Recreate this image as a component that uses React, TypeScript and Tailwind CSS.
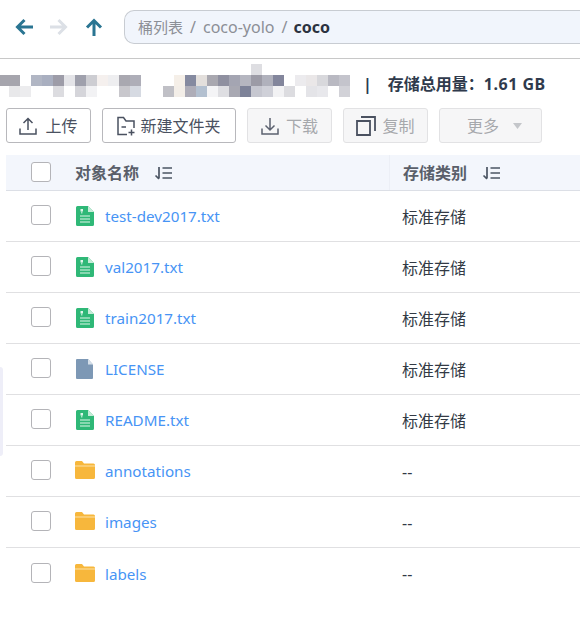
import React from "react";

const font = { fontFamily: '"Noto Sans", "Noto Sans CJK SC", sans-serif' };

function Sort() {
  return (
    <svg width="19" height="14" viewBox="0 0 19 14" className="ml-[15px]" fill="none" stroke="#4b5563" strokeWidth="1.700">
      <path d="M5 1v11.500M1.500 9.500 5 12.800" />
      <path d="M8.500 2H18M8.500 7H18M8.500 12H18" />
    </svg>
  );
}

function Check() {
  return <span className="block w-5 h-5 -mt-[2px] rounded-[3px] border border-[#b4b4b8] bg-white shrink-0" />;
}

function TxtIcon() {
  return (
    <svg width="18" height="20" viewBox="0 0 18 20" className="ml-px -mt-px">
      <path d="M1.500 0H12l6 6v12.500a1.500 1.500 0 0 1-1.500 1.500h-15A1.500 1.500 0 0 1 0 18.500V1.500A1.500 1.500 0 0 1 1.500 0Z" fill="#2fb877" />
      <path d="M12 0l6 6h-6Z" fill="#c5ecd8" />
      <path d="M4 10h10M4 13h10M4 16h10" stroke="#dff5ea" strokeWidth="1.200" />
      <rect x="4.500" y="3" width="2.500" height="2.500" fill="#dff5ea" />
      <rect x="5.300" y="5.500" width="1" height="2" fill="#dff5ea" />
    </svg>
  );
}

function FileIcon() {
  return (
    <svg width="17" height="20" viewBox="0 0 17 20" className="ml-px -mt-px">
      <path d="M1 0H12l5 5.500V19a1 1 0 0 1-1 1H1a1 1 0 0 1-1-1V1a1 1 0 0 1 1-1Z" fill="#7d98b5" />
      <path d="M12 0l5 5.500h-5Z" fill="#d5dfe9" />
    </svg>
  );
}

function FolderIcon() {
  return (
    <svg width="20" height="18" viewBox="0 0 20 18" className="-mt-[2px]">
      <path d="M1.500 0H7l2 2.500h9.500A1.500 1.500 0 0 1 20 4v12.500a1.500 1.500 0 0 1-1.500 1.500h-17A1.500 1.500 0 0 1 0 16.500V1.500A1.500 1.500 0 0 1 1.500 0Z" fill="#f7b73c" />
      <path d="M0 5h20" stroke="#fde2a8" strokeWidth="1" />
    </svg>
  );
}

const mosaic: [number, number, string][] = [
  [0, 0, "#a6a5ad"], [1, 0, "#a6a5ad"], [3, 0, "#b1b6c4"], [4, 0, "#a9afc0"], [5, 0, "#9d9ca8"], [6, 0, "#e4e4e8"], [7, 0, "#9fa0ac"], [8, 0, "#cdcdd2"], [9, 0, "#f5f0ee"], [10, 0, "#eeeef0"], [11, 0, "#a9a8b0"], [12, 0, "#aeaeb8"],
  [1, 1, "#e8e8ea"], [2, 1, "#ececee"], [5, 1, "#dcdce0"], [7, 1, "#d5d5da"], [8, 1, "#f2f2f4"], [11, 1, "#c8c7cc"], [12, 1, "#d6dae2"],
  [16, 0, "#f5efe8"], [17, 0, "#858aa0"], [18, 0, "#e3dfdc"], [19, 0, "#a9a8b0"], [20, 0, "#8f90a0"], [21, 0, "#a4a5b2"], [22, 0, "#b5b6c0"], [23, 0, "#9c9ba6"], [24, 0, "#b0b1bc"], [25, 0, "#83869c"],
  [15, 1, "#c0c0c6"], [16, 1, "#f3eee8"], [17, 1, "#aeadb8"], [18, 1, "#b3c0d0"], [19, 1, "#f4f4f6"], [20, 1, "#dedee2"], [21, 1, "#a8a8b2"], [22, 1, "#7d8298"], [23, 1, "#c6c7d0"], [24, 1, "#cfd0d8"], [25, 1, "#f2f2f4"], [26, 1, "#dcdce0"],
  [23, -1, "#dedee2"],
  [27, 0, "#ecebee"], [28, 0, "#eae7e8"], [29, 0, "#d8d8dc"], [30, 0, "#b9b9c2"], [31, 0, "#c4c4cc"],
  [28, 1, "#e4e4e8"], [29, 1, "#e8e8ec"], [31, 1, "#d2d2d8"], [32, 1, "#cdcdd3"],
];

function Mosaic() {
  return (
    <svg width="350" height="50" viewBox="0 0 350 50" className="shrink-0">
      {mosaic.map(([c, r, f], i) => (
        <rect key={i} x={c * 11 - 2} y={16 + r * 11} width="11" height="11" fill={f} />
      ))}
    </svg>
  );
}

const rows = [
  { name: "test-dev2017.txt", type: "标准存储", icon: <TxtIcon /> },
  { name: "val2017.txt", type: "标准存储", icon: <TxtIcon /> },
  { name: "train2017.txt", type: "标准存储", icon: <TxtIcon /> },
  { name: "LICENSE", type: "标准存储", icon: <FileIcon /> },
  { name: "README.txt", type: "标准存储", icon: <TxtIcon /> },
  { name: "annotations", type: "--", icon: <FolderIcon /> },
  { name: "images", type: "--", icon: <FolderIcon /> },
  { name: "labels", type: "--", icon: <FolderIcon /> },
];

export default function App() {
  return (
    <div style={font} className="relative w-[580px] h-[626px] overflow-hidden bg-white text-base text-[#333]">
      <div className="absolute left-0 top-[367px] w-[3px] h-[89px] rounded-r-md bg-[#eeeef8]" />

      <div className="h-[59px] border-b border-[#c8c8c8] flex items-start pt-[10px]">
        <div className="w-[124px] h-[34px] flex items-center pl-[15px] gap-[17px] shrink-0">
          <svg width="18" height="18" viewBox="0 0 18 18" fill="none" stroke="#2a7592" strokeWidth="3"><path d="M18 9H3M9.500 2 2.500 9l7 7" /></svg>
          <svg width="18" height="18" viewBox="0 0 18 18" fill="none" stroke="#dce0e6" strokeWidth="3"><path d="M0 9h15M8.500 2l7 7-7 7" /></svg>
          <svg width="18" height="18" viewBox="0 0 18 18" fill="none" stroke="#2a7592" strokeWidth="3"><path d="M9 18V3M2 9.500 9 2.500l7 7" /></svg>
        </div>
        <div className="flex-1 h-[34px] flex items-center pl-[13px] rounded-l-[10px] border-y border-l border-[#c8ccd2] bg-[#f1f5fc] text-[#8c8f96]">
          <span className="text-[15px]">桶列表</span>
          <span className="mx-[7px]">/</span>
          <span>coco-yolo</span>
          <span className="mx-[7px]">/</span>
          <span className="font-bold text-[#2b3240] -ml-px">coco</span>
        </div>
      </div>

      <div className="h-[49px] flex items-center">
        <Mosaic />
        <span className="ml-[13px] font-bold text-[#2b3a50]">|</span>
        <span className="ml-[16px] font-bold text-[#2f3a4c]">存储总用量：<span className="tracking-[0.5px]">1.61 GB</span></span>
      </div>

      <div className="flex items-center gap-[11px] pl-[6px] h-[35px]">
        <button className="h-[35px] w-[85px] flex items-center justify-center gap-[8px] rounded-[3px] border border-[#b8b8bc] bg-white text-[#4a5160]">
          <svg width="18" height="18" viewBox="0 0 18 18" fill="none" stroke="#4a5160" strokeWidth="1.500"><path d="M9 13V1.500M4.500 6 9 1.500 13.500 6M1 11.500V17h16v-5.500" /></svg>
          上传
        </button>
        <button className="h-[35px] w-[134px] flex items-center justify-center gap-[5px] rounded-[3px] border border-[#b8b8bc] bg-white text-[#4a5160]">
          <svg width="18" height="20" viewBox="0 0 18 20" fill="none" stroke="#4a5160" strokeWidth="1.500"><path d="M10 18.500H1V1.500h5.500L9 5h8v7M4.500 11h4.500M14.500 13.500v6M11.500 16.500h6" /></svg>
          新建文件夹
        </button>
        <button className="h-[35px] w-[85px] flex items-center justify-center gap-[7px] rounded-[3px] border border-[#e2e2e4] bg-[#f6f6f7] text-[#a6a8ac]">
          <svg width="18" height="18" viewBox="0 0 18 18" fill="none" stroke="#5c6270" strokeWidth="1.500"><path d="M9 1v12M4.500 8.500 9 13l4.500-4.500M1 11.500V17h16v-5.500" /></svg>
          下载
        </button>
        <button className="h-[35px] w-[85px] flex items-center justify-center gap-[6px] rounded-[3px] border border-[#e2e2e4] bg-[#f6f6f7] text-[#a6a8ac]">
          <svg width="20" height="20" viewBox="0 0 20 20" fill="none" stroke="#4a5160" strokeWidth="1.800"><path d="M1 5h13v14H1ZM5 1h14v14" /></svg>
          复制
        </button>
        <button className="h-[35px] w-[103px] flex items-center justify-center gap-[14px] rounded-[3px] border border-[#e2e2e4] bg-[#f6f6f7] text-[#a6a8ac] pl-[8px]">
          更多
          <svg width="9" height="6" viewBox="0 0 9 6"><path d="M0 0h9L4.500 6Z" fill="#c4c6ca" /></svg>
        </button>
      </div>

      <div className="mt-[12px] ml-[6px]">
        <div className="h-[36px] flex items-center bg-[#f3f6fc] border-b border-[#dcdfe6] font-semibold text-[#5a5f6a]">
          <div className="w-[69px] pl-[25px] shrink-0"><Check /></div>
          <div className="w-[315px] flex items-center h-full border-r border-[#eceff6] shrink-0">对象名称<Sort /></div>
          <div className="pl-[13px] flex items-center">存储类别<Sort /></div>
        </div>
        {rows.map((r) => (
          <div key={r.name} className="h-[51px] flex items-center border-b border-[#e0e0e2] last:border-b-0">
            <div className="w-[69px] pl-[25px] shrink-0"><Check /></div>
            <div className="w-[30px] shrink-0 flex">{r.icon}</div>
            <div className="w-[285px] shrink-0 text-[15.2px] text-[#4794f5] pt-px">{r.name}</div>
            <div className="pl-[12px] text-[#333a45] pt-px">{r.type}</div>
          </div>
        ))}
      </div>
    </div>
  );
}
